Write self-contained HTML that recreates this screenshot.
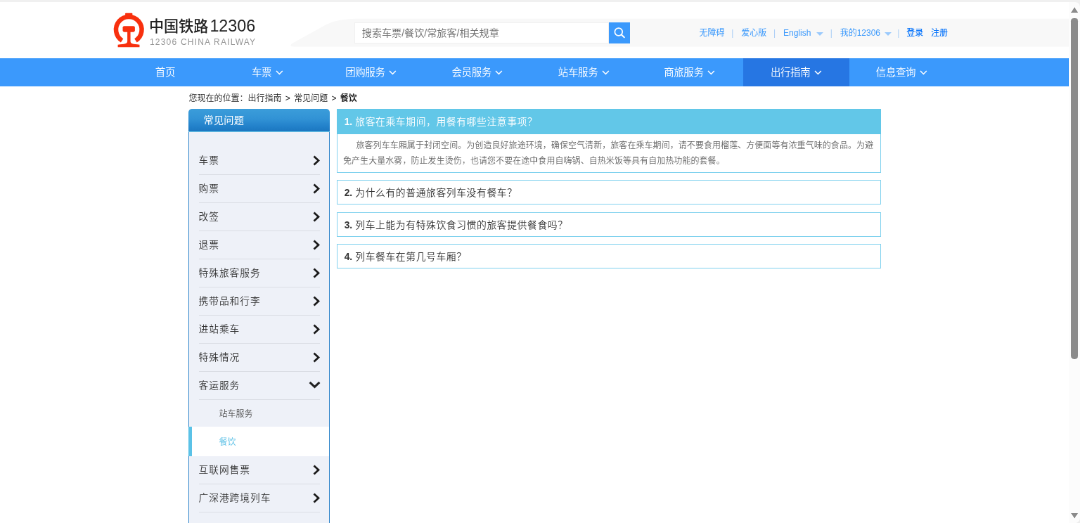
<!DOCTYPE html>
<html lang="zh-CN">
<head>
<meta charset="utf-8">
<title>餐饮 - 常见问题 - 中国铁路12306</title>
<style>
*{box-sizing:border-box;margin:0;padding:0}
html,body{width:1080px;height:523px;overflow:hidden;background:#fff}
body{position:relative;font-family:"Liberation Sans","Noto Sans CJK SC",sans-serif;color:#333}
ul{list-style:none}
/* outer frame */
#frame-top{position:absolute;left:0;top:0;width:1080px;height:2px;background:#f0f0f0}
#sb{position:absolute;left:1069.45px;top:2px;width:10.6px;height:521px;background:#fcfcfc}
#sb .thumb{position:absolute;left:1.9px;top:16px;width:6.6px;height:341.2px;border-radius:3.3px;background:#8b8b8b}
#sb svg{position:absolute;left:0;top:0}
#corner-tr{position:absolute;right:0;top:0;width:6px;height:8px}
#corner-br{position:absolute;right:0;bottom:0;width:6px;height:6px}
/* scaled page */
#page{position:absolute;left:0;top:2px;width:1521px;height:760px;transform:scale(.703125);transform-origin:0 0;will-change:transform;background:#fff;overflow:hidden}
.header{position:relative;height:80px;background:#fff}
.header .band{position:absolute;left:0;top:0;width:1521px;height:80px}
.logo{position:absolute;left:153.4px;top:7.5px;width:62.58px;height:62.58px}
.brand{position:absolute;left:212px;top:19px;white-space:nowrap;line-height:30px;font-size:23.3px;color:#222}
.brand b{font-weight:500;font-size:21.1px;margin-right:2px}
.brand-sub{position:absolute;left:213px;top:48.6px;white-space:nowrap;font-size:12px;line-height:16px;color:#949494;letter-spacing:1.2px}
.search{position:absolute;left:503.5px;top:29px;width:362.7px;height:30px;background:#fff;border:1px solid #f0f0f0;font-size:14.1px;line-height:28px;color:#757575;padding-left:10.3px;white-space:nowrap}
.search-btn{position:absolute;left:866.1px;top:29px;width:30px;height:30px;background:#3b99fc}
.toplinks{position:absolute;left:982.6px;top:34px;height:20px;line-height:20px;font-size:12px;color:#3b99fc;white-space:nowrap}
.toplinks span{position:absolute;top:0}
.toplinks .sep{color:#a9cdf6}
.toplinks .strong{color:#0b76fb;font-weight:500}
.toplinks i{position:absolute;top:8.6px;width:0;height:0;margin-left:-.8px;border:5.6px solid transparent;border-top:5.4px solid #9ac9fc;border-bottom:0}
.nav{position:relative;height:40px;background:#3b99fc}
.nav .it{position:absolute;top:0;height:40px;line-height:40.4px;font-size:14.5px;letter-spacing:-.4px;font-weight:350;color:#fff;text-align:center;white-space:nowrap}
.nav .it.on{background:#2676e3}
.nav .it svg{display:inline-block;vertical-align:middle;margin-left:5.5px;margin-top:-1px}
.wrap{width:986px;margin:0 auto;position:relative;font-family:"Liberation Sans","Noto Sans CJK SC",sans-serif;font-weight:350}
.crumb{height:31.8px;line-height:35.4px;font-size:12px;color:#1a1a1a;white-space:nowrap;padding-left:1px;word-spacing:2px;font-weight:350}
.crumb b{font-weight:700;color:#222}
.side{position:absolute;left:0;top:31.8px;width:201px}
.side .hd{height:33.4px;line-height:32.6px;border-radius:5px 5px 0 0;background:linear-gradient(#3b9dda,#3192d5 45%,#2382cb 75%,#1b77c0);border-bottom:1px solid #6fc8e8;color:#fff;font-size:14.2px;font-weight:400;letter-spacing:.2px;padding-left:22px}
.side .bd{border:1px solid #2f84ca;border-top:0;background:#eef1f8;padding-top:20.4px;height:700px}
.side li.m{margin:0 13px 0 14px;height:40px;line-height:40.2px;font-weight:350;border-bottom:1px solid #dadde4;font-size:13.7px;letter-spacing:1px;color:#333;position:relative;white-space:nowrap}
.side li.m svg{position:absolute;right:-.2px;top:12.2px}
.side li.m.open svg{right:-1.2px;top:13.8px}
.side li.s{height:38.5px;line-height:41.4px;font-size:12px;color:#555;padding-left:43px;white-space:nowrap}
.side li.s.on{height:42px;line-height:44.7px;background:#fff;color:#5bc0e6;border-left:5px solid #5bc2e7;margin-left:-1px;padding-left:39px}
.main{position:absolute;left:211.2px;top:31.8px;width:774.6px}
.qa{border:1px solid #80d1ee;margin-bottom:10.5px;background:#fff}
.qa .q{height:33px;line-height:35px;font-size:13.8px;letter-spacing:.6px;color:#333;padding-left:10px;white-space:nowrap}
.qa .q b{font-weight:700;letter-spacing:0;margin-right:-.4px}
.qa.open{border-top:0}
.qa.open .q{height:36.2px;line-height:38.2px;background:#62c7e8;color:#fff;margin:0 -1px;padding-left:11px}
.qa .a{padding:5px 0 5px 8.3px;font-size:12px;line-height:22px;color:#666;white-space:nowrap;letter-spacing:.06px}
.qa .a .ind{display:inline-block;width:18.5px}
</style>
</head>
<body>
<div id="page">
  <div class="header">
    <svg class="band" viewBox="0 0 1521 80" preserveAspectRatio="none"><path d="M1521 23.7H512C497 23.7 486 24.8 477.2 27.2C470 29.3 466 31 461.4 33.5L429.8 50.9L418.5 57.2C412 60.6 411.5 63.5 417.5 63.5H1521Z" fill="#f8f8f8"/></svg>
    <svg class="logo" viewBox="0 0 523 523">
      <path d="M172 391.7A153 153 0 1 1 334 391.7" fill="none" stroke="#f8300e" stroke-width="54"/>
      <path d="M210 71Q210 65 216 65H289Q295 65 295 71V118H210Z" fill="#f8300e"/>
      <rect x="180" y="219" width="145" height="71" rx="18" fill="#f8300e"/>
      <path d="M235 280H272V400C272 430 300 436 380 440V470H122V440C205 436 235 430 235 400Z" fill="#f8300e"/>
    </svg>
    <div class="brand"><b>中国铁路</b>12306</div>
    <div class="brand-sub">12306 CHINA RAILWAY</div>
    <div class="search">搜索车票/餐饮/常旅客/相关规章</div>
    <div class="search-btn"><svg width="30" height="30" viewBox="0 0 30 30"><circle cx="13.8" cy="13.5" r="5.4" fill="none" stroke="#fff" stroke-width="1.7"/><path d="M17.8 17.5L21.8 21.2" stroke="#fff" stroke-width="2" stroke-linecap="round"/></svg></div>
    <div class="toplinks">
      <span style="left:11.95px">无障碍</span><span class="sep" style="left:57.74px">|</span>
      <span style="left:71.68px">爱心版</span><span class="sep" style="left:117.48px">|</span>
      <span style="left:131.41px">English</span><i style="left:179.2px"></i><span class="sep" style="left:198.12px">|</span>
      <span style="left:212.05px">我的12306</span><i style="left:275.77px"></i><span class="sep" style="left:293.69px">|</span>
      <span class="strong" style="left:306.63px">登录</span><span class="strong" style="left:341.48px">注册</span>
    </div>
  </div>
  <div class="nav">
    <div class="it" style="left:160.28px;width:149.33px">首页</div>
    <div class="it" style="left:305.64px;width:149.33px">车票<svg width="11" height="7" viewBox="0 0 11 7"><path d="M1 1L5.4 5.5L9.8 1" fill="none" stroke="#fff" stroke-width="1.55"/></svg></div>
    <div class="it" style="left:452.98px;width:149.33px">团购服务<svg width="11" height="7" viewBox="0 0 11 7"><path d="M1 1L5.4 5.5L9.8 1" fill="none" stroke="#fff" stroke-width="1.55"/></svg></div>
    <div class="it" style="left:604.3px;width:149.33px">会员服务<svg width="11" height="7" viewBox="0 0 11 7"><path d="M1 1L5.4 5.5L9.8 1" fill="none" stroke="#fff" stroke-width="1.55"/></svg></div>
    <div class="it" style="left:755.63px;width:149.33px">站车服务<svg width="11" height="7" viewBox="0 0 11 7"><path d="M1 1L5.4 5.5L9.8 1" fill="none" stroke="#fff" stroke-width="1.55"/></svg></div>
    <div class="it" style="left:905.96px;width:149.33px">商旅服务<svg width="11" height="7" viewBox="0 0 11 7"><path d="M1 1L5.4 5.5L9.8 1" fill="none" stroke="#fff" stroke-width="1.55"/></svg></div>
    <div class="it on" style="left:1056.68px;width:151.32px">出行指南<svg width="11" height="7" viewBox="0 0 11 7"><path d="M1 1L5.4 5.5L9.8 1" fill="none" stroke="#fff" stroke-width="1.55"/></svg></div>
    <div class="it" style="left:1207.61px;width:149.33px">信息查询<svg width="11" height="7" viewBox="0 0 11 7"><path d="M1 1L5.4 5.5L9.8 1" fill="none" stroke="#fff" stroke-width="1.55"/></svg></div>
  </div>
  <div class="wrap">
    <div class="crumb">您现在的位置：出行指南 &gt; 常见问题 &gt; <b>餐饮</b></div>
    <div class="side">
      <div class="hd">常见问题</div>
      <div class="bd">
        <ul>
          <li class="m">车票<svg width="10" height="15" viewBox="0 0 10 15"><path d="M1.5 1.5L8 7.5L1.5 13.5" fill="none" stroke="#1a1a1a" stroke-width="2.8"/></svg></li>
          <li class="m">购票<svg width="10" height="15" viewBox="0 0 10 15"><path d="M1.5 1.5L8 7.5L1.5 13.5" fill="none" stroke="#1a1a1a" stroke-width="2.8"/></svg></li>
          <li class="m">改签<svg width="10" height="15" viewBox="0 0 10 15"><path d="M1.5 1.5L8 7.5L1.5 13.5" fill="none" stroke="#1a1a1a" stroke-width="2.8"/></svg></li>
          <li class="m">退票<svg width="10" height="15" viewBox="0 0 10 15"><path d="M1.5 1.5L8 7.5L1.5 13.5" fill="none" stroke="#1a1a1a" stroke-width="2.8"/></svg></li>
          <li class="m">特殊旅客服务<svg width="10" height="15" viewBox="0 0 10 15"><path d="M1.5 1.5L8 7.5L1.5 13.5" fill="none" stroke="#1a1a1a" stroke-width="2.8"/></svg></li>
          <li class="m">携带品和行李<svg width="10" height="15" viewBox="0 0 10 15"><path d="M1.5 1.5L8 7.5L1.5 13.5" fill="none" stroke="#1a1a1a" stroke-width="2.8"/></svg></li>
          <li class="m">进站乘车<svg width="10" height="15" viewBox="0 0 10 15"><path d="M1.5 1.5L8 7.5L1.5 13.5" fill="none" stroke="#1a1a1a" stroke-width="2.8"/></svg></li>
          <li class="m">特殊情况<svg width="10" height="15" viewBox="0 0 10 15"><path d="M1.5 1.5L8 7.5L1.5 13.5" fill="none" stroke="#1a1a1a" stroke-width="2.8"/></svg></li>
          <li class="m open">客运服务<svg width="17" height="11" viewBox="0 0 17 11"><path d="M1.6 1.8L8.5 8.4L15.4 1.8" fill="none" stroke="#222" stroke-width="3"/></svg></li>
          <li class="s">站车服务</li>
          <li class="s on">餐饮</li>
          <li class="m">互联网售票<svg width="10" height="15" viewBox="0 0 10 15"><path d="M1.5 1.5L8 7.5L1.5 13.5" fill="none" stroke="#1a1a1a" stroke-width="2.8"/></svg></li>
          <li class="m">广深港跨境列车<svg width="10" height="15" viewBox="0 0 10 15"><path d="M1.5 1.5L8 7.5L1.5 13.5" fill="none" stroke="#1a1a1a" stroke-width="2.8"/></svg></li>
        </ul>
      </div>
    </div>
    <div class="main">
      <div class="qa open">
        <div class="q"><b>1.</b> 旅客在乘车期间，用餐有哪些注意事项？</div>
        <div class="a"><span class="ind"></span>旅客列车车厢属于封闭空间。为创造良好旅途环境，确保空气清新，旅客在乘车期间，请不要食用榴莲、方便面等有浓重气味的食品。为避<br>免产生大量水雾，防止发生烫伤，也请您不要在途中食用自嗨锅、自热米饭等具有自加热功能的套餐。</div>
      </div>
      <div class="qa"><div class="q"><b>2.</b> 为什么有的普通旅客列车没有餐车？</div></div>
      <div class="qa"><div class="q"><b>3.</b> 列车上能为有特殊饮食习惯的旅客提供餐食吗？</div></div>
      <div class="qa"><div class="q"><b>4.</b> 列车餐车在第几号车厢？</div></div>
    </div>
  </div>
</div>
<div id="frame-top"></div>
<div id="sb">
  <div class="thumb"></div>
  <svg width="10.6" height="521" viewBox="0 0 10.6 521">
    <path d="M1.9 10.5L5.5 5.1L9.1 10.5Z" fill="#8b8b8b"/>
    <path d="M1.9 511.2L5.5 516.5L9.1 511.2Z" fill="#8b8b8b"/>
  </svg>
</div>
<svg id="corner-tr" viewBox="0 0 6 8"><path d="M0 0H6V8C6 4 4 2 0 2Z" fill="#f0f0f0"/></svg>
<svg id="corner-br" viewBox="0 0 6 6"><path d="M6 0V6H0C4 6 6 4 6 0Z" fill="#ededed"/></svg>
</body>
</html>
